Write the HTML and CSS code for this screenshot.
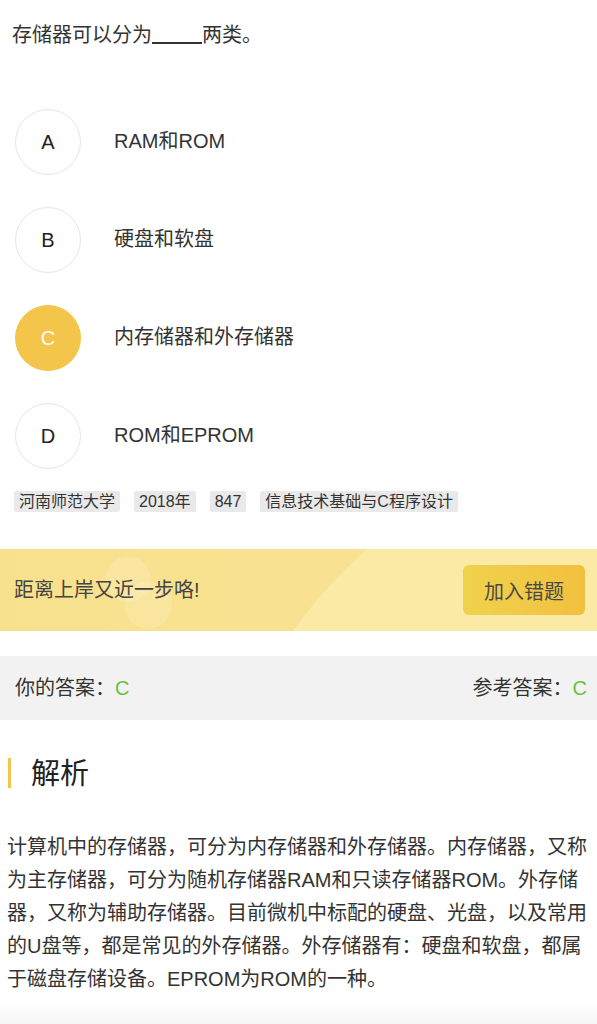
FILE: index.html
```html
<!DOCTYPE html>
<html lang="zh-CN">
<head>
    <meta charset="UTF-8">
    <meta name="viewport" content="width=device-width, initial-scale=1.0">
    <title>题目解析</title>
    <link rel="stylesheet" href="styles.css">
</head>
<body>
    <div class="page">
        <div class="question">存储器可以分为<span class="blank"></span>两类。</div>

        <div class="options">
            <div class="option">
                <span class="option-key">A</span>
                <span class="option-text">RAM和ROM</span>
            </div>
            <div class="option">
                <span class="option-key">B</span>
                <span class="option-text">硬盘和软盘</span>
            </div>
            <div class="option selected">
                <span class="option-key">C</span>
                <span class="option-text">内存储器和外存储器</span>
            </div>
            <div class="option">
                <span class="option-key">D</span>
                <span class="option-text">ROM和EPROM</span>
            </div>
        </div>

        <div class="tags">
            <span class="tag">河南师范大学</span>
            <span class="tag">2018年</span>
            <span class="tag">847</span>
            <span class="tag">信息技术基础与C程序设计</span>
        </div>

        <div class="banner">
            <span class="banner-text">距离上岸又近一步咯!</span>
            <button class="add-wrong">加入错题</button>
        </div>

        <div class="answer-bar">
            <span>你的答案：<em class="answer">C</em></span>
            <span>参考答案：<em class="answer">C</em></span>
        </div>

        <h2 class="section-title">解析</h2>

        <p class="analysis">计算机中的存储器，可分为内存储器和外存储器。内存储器，又称为主存储器，可分为随机存储器RAM和只读存储器ROM。外存储器，又称为辅助存储器。目前微机中标配的硬盘、光盘，以及常用的U盘等，都是常见的外存储器。外存储器有：硬盘和软盘，都属于磁盘存储设备。EPROM为ROM的一种。</p>
    </div>
    <div class="bottom-fade"></div>
</body>
</html>
```

FILE: styles.css
```css
* {
    margin: 0;
    padding: 0;
    box-sizing: border-box;
}

body {
    font-family: "Liberation Sans", "Noto Sans CJK SC", sans-serif;
    color: #333;
    background: #fff;
}

.question {
    padding: 20px 12px 0;
    font-size: 20px;
    line-height: 30px;
}

.blank {
    display: inline-block;
    width: 50px;
    height: 20px;
    border-bottom: 2px solid #333;
    vertical-align: -2px;
}

.options {
    margin-top: 43px;
}

.option {
    display: flex;
    align-items: center;
    height: 98px;
    padding-left: 15px;
}

.option-key {
    width: 66px;
    height: 66px;
    border: 1px solid #e6e6e6;
    border-radius: 50%;
    display: flex;
    align-items: center;
    justify-content: center;
    font-size: 20px;
    color: #222;
}

.option.selected .option-key {
    background: #f4c54b;
    border-color: #f4c54b;
    color: #fff;
}

.option-text {
    margin: 0 0 5px 33px;
    font-size: 20px;
}

.tags {
    display: flex;
    gap: 14px;
    padding-left: 14px;
    margin-top: 6px;
}

.tag {
    height: 21px;
    line-height: 21px;
    padding: 0 5px;
    font-size: 16px;
    background: #e9e9e9;
    border-radius: 2px;
    color: #333;
}

.banner {
    margin-top: 37px;
    height: 82px;
    display: flex;
    align-items: center;
    justify-content: space-between;
    padding: 0 12px 0 14px;
    background:
        radial-gradient(circle at 128px 30px, rgba(255, 255, 255, 0.14) 22px, transparent 23px),
        radial-gradient(circle at 148px 56px, rgba(255, 255, 255, 0.14) 23px, transparent 24px),
        radial-gradient(circle at 705px 380px, #faeaa6 0 508px, transparent 509px),
        linear-gradient(90deg, #f8e18d, #f8e395);
}

.banner-text {
    font-size: 20px;
    color: #444;
    margin-bottom: 3px;
}

.add-wrong {
    width: 122px;
    height: 50px;
    border: none;
    border-radius: 6px;
    background: linear-gradient(90deg, #efd24c, #f2c03f);
    font-family: inherit;
    font-size: 20px;
    color: #4a4a4a;
}

.answer-bar {
    margin-top: 25px;
    height: 64px;
    background: #f2f2f2;
    display: flex;
    align-items: center;
    justify-content: space-between;
    padding: 0 10px 4px 15px;
    font-size: 20px;
}

.answer {
    font-style: normal;
    color: #67c23a;
}

.section-title {
    margin: 38px 0 0 8px;
    padding: 3px 0 0 20px;
    border-left: 3px solid #f5c44a;
    font-size: 29px;
    font-weight: normal;
    line-height: 27px;
    color: #222;
}

.analysis {
    margin-top: 43px;
    padding: 0 7px;
    font-size: 20px;
    line-height: 33px;
}

.bottom-fade {
    position: fixed;
    left: 0;
    right: 0;
    bottom: 0;
    height: 22px;
    background: linear-gradient(rgba(246, 246, 246, 0), #f6f6f6);
}
```
